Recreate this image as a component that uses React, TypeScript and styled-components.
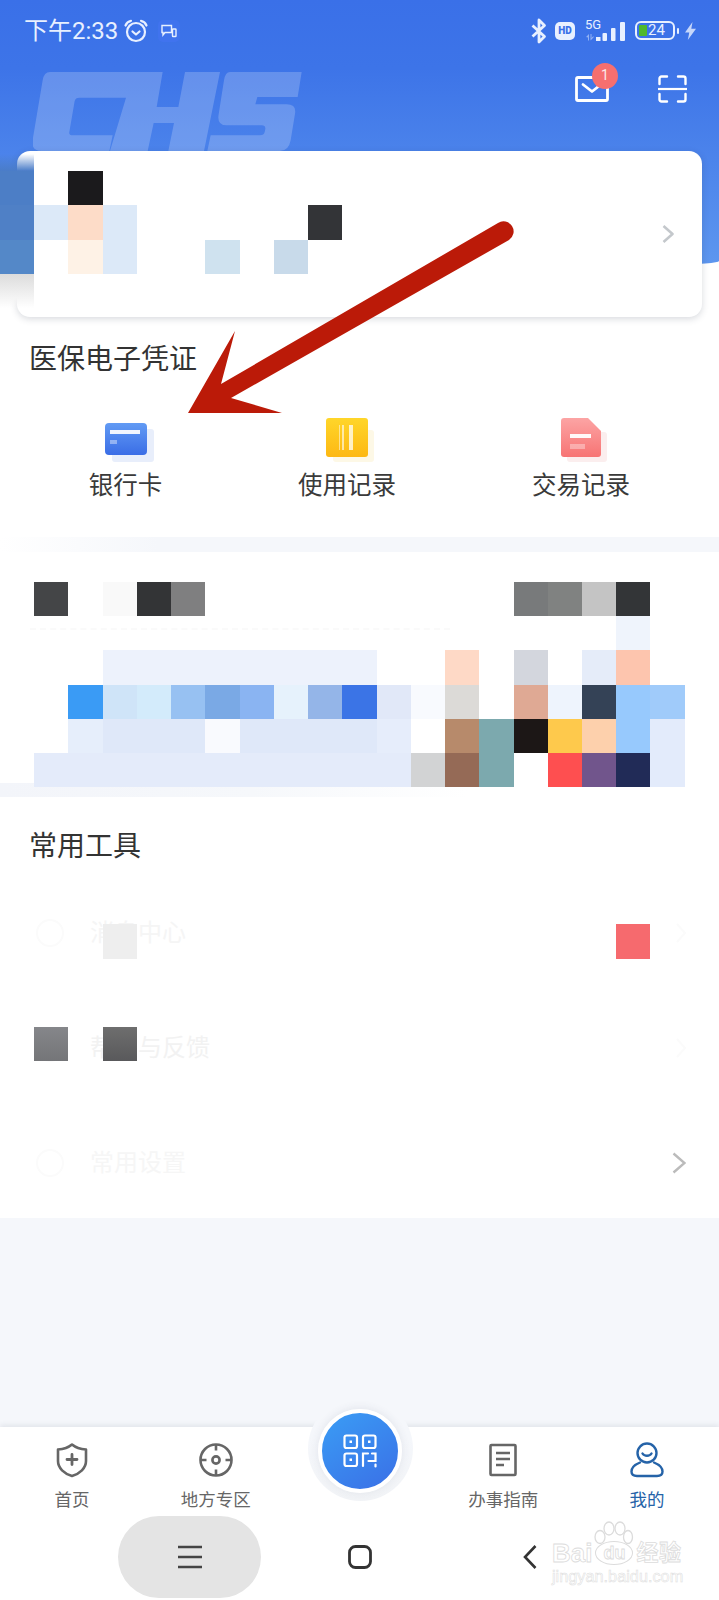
import styled, { createGlobalStyle } from 'styled-components';

const FONT = `Roboto, 'Noto Sans CJK SC', 'Noto Sans', sans-serif`;
const CELL = 719 / 21;

const GlobalStyle = createGlobalStyle`
  html, body {
    margin: 0;
    padding: 0;
    background: #fff;
  }
  * {
    box-sizing: border-box;
  }
`;

const Page = styled.div`
  position: relative;
  width: 719px;
  height: 1600px;
  overflow: hidden;
  background: #fff;
  font-family: ${FONT};
  color: #333;
`;

const Header = styled.header`
  height: 274px;
  padding-top: 1px;
  background: linear-gradient(180deg, #3a70e8 0%, #3d74e8 25%, #5f98ef 100%);
  border-bottom-right-radius: 719px 13px;
`;

const StatusBar = styled.div`
  height: 59px;
  padding: 0 23px 0 24px;
  display: flex;
  align-items: center;
  justify-content: space-between;
  color: #e8f0ff;
`;

const StatusGroup = styled.div`
  display: flex;
  align-items: center;
`;

const Clock = styled.span`
  font-size: 24px;
  line-height: 28px;
  margin-right: 6px;
`;

const AppChip = styled.span`
  width: 22px;
  height: 22px;
  margin-left: 10px;
  border-radius: 5px;
  background: #4073ee;
  display: flex;
  align-items: center;
  justify-content: center;
`;

const HdChip = styled.span`
  width: 20px;
  height: 18px;
  margin: 0 10px 0 8px;
  border-radius: 5px;
  background: #e8f0ff;
  color: #3a70e8;
  font-size: 10px;
  font-weight: 900;
  line-height: 18px;
  text-align: center;
`;

const BatteryShell = styled.span`
  width: 40px;
  height: 19px;
  margin-left: 9px;
  padding: 2px;
  border: 2px solid #e8f0ff;
  border-radius: 6px;
  display: flex;
  align-items: center;
`;

const BatteryFill = styled.span`
  width: 8px;
  height: 11px;
  background: #4fb82c;
  border-radius: 1px;
`;

const BatteryLevel = styled.span`
  margin-left: 1px;
  font-size: 15px;
  line-height: 15px;
`;

const BatteryNub = styled.span`
  width: 2px;
  height: 6px;
  margin: 0 6px 0 2px;
  background: #e8f0ff;
  border-radius: 1px;
`;

const ActionRow = styled.div`
  margin-top: 15px;
  padding-right: 32px;
  height: 28px;
  display: flex;
  justify-content: flex-end;
  align-items: center;
  gap: 49px;
`;

const MailButton = styled.div`
  position: relative;
  width: 34px;
  height: 26px;
`;

const MailBadge = styled.span`
  position: absolute;
  top: -13px;
  right: -9px;
  width: 26px;
  height: 26px;
  border-radius: 50%;
  background: #f66f6f;
  color: #fbe9e9;
  font-size: 14px;
  line-height: 25px;
  text-align: center;
`;

const LogoMark = styled.svg`
  position: absolute;
  top: 72px;
  left: 33px;
  opacity: 0.2;
`;

const ProfileCard = styled.section`
  position: relative;
  width: 685px;
  height: 166px;
  margin: -123px 0 0 17px;
  border-radius: 13px;
  background: #fff;
  box-shadow: 0 2px 7px rgba(40, 50, 70, 0.18);
  display: flex;
  align-items: center;
  justify-content: flex-end;
  padding-right: 28px;
`;

const Voucher = styled.section`
  height: 220px;
  padding-top: 23px;
`;

const SectionTitle = styled.h2`
  margin: 0;
  padding-left: 29px;
  font-size: 28px;
  font-weight: 400;
  line-height: 40px;
  color: #333;
`;

const VoucherGrid = styled.div`
  margin-top: 36px;
  display: grid;
  grid-template-columns: 251px 192px 1fr;
`;

const VoucherItem = styled.div`
  display: flex;
  flex-direction: column;
  align-items: center;
`;

const VoucherLabel = styled.span`
  margin-top: 6px;
  font-size: 24.5px;
  line-height: 32px;
  color: #3a3a3a;
`;

const Band = styled.div<{ $fade: 'left' | 'right' }>`
  height: ${(p) => (p.$fade === 'left' ? 15 : 14)}px;
  background: ${(p) =>
    p.$fade === 'left'
      ? 'linear-gradient(90deg, #fff 0%, #f5f7fb 22%, #f5f7fb 100%)'
      : 'linear-gradient(90deg, #f3f5fa 0%, #f6f8fb 35%, #fff 65%)'};
`;

const Promo = styled.section`
  height: 231px;
  padding: 76px 269px 0 30px;
`;

const FaintRule = styled.div`
  border-top: 2px dashed #fafafa;
`;

const Tools = styled.section`
  height: 421px;
  padding-top: 30px;
`;

const ToolList = styled.div`
  margin-top: 8px;
`;

const ToolRow = styled.div`
  height: 115px;
  padding: 0 33px 0 36px;
  display: flex;
  align-items: center;
`;

const ToolGlyph = styled.span`
  width: 28px;
  height: 28px;
  border: 2px solid #fbfbfb;
  border-radius: 50%;
`;

const ToolLabel = styled.span<{ $tone: string }>`
  margin-left: 26px;
  flex: 1;
  font-size: 24px;
  line-height: 32px;
  color: ${(p) => p.$tone};
`;

const Filler = styled.div`
  height: 209px;
  background: #f5f7fb;
`;

const TabBar = styled.nav`
  position: relative;
  height: 173px;
  background: #fff;
  box-shadow: 0 -2px 5px rgba(60, 70, 90, 0.1);
`;

const TabGrid = styled.div`
  display: grid;
  grid-template-columns: repeat(5, 1fr);
  height: 87px;
  padding-top: 15px;
`;

const Tab = styled.div<{ $active?: boolean }>`
  display: flex;
  flex-direction: column;
  align-items: center;
  color: ${(p) => (p.$active ? '#2563a8' : '#666')};
`;

const TabLabel = styled.span`
  margin-top: 10px;
  font-size: 17.5px;
  line-height: 24px;
`;

const FabHalo = styled.div`
  position: absolute;
  top: -31px;
  left: 50%;
  width: 105px;
  height: 105px;
  margin-left: -52px;
  border-radius: 50%;
  background: linear-gradient(180deg, #f5f7fb 0%, #f5f7fb 40%, #f1f3f6 100%);
  display: flex;
  align-items: center;
  justify-content: center;
  padding-top: 4px;
`;

const FabButton = styled.div`
  width: 84px;
  height: 84px;
  border: 4px solid #fff;
  border-radius: 50%;
  background: linear-gradient(145deg, #3a9df5 0%, #3a6fe6 100%);
  box-shadow: 0 -1px 9px rgba(60, 70, 100, 0.1);
  display: flex;
  align-items: center;
  justify-content: center;
`;

const NavKeys = styled.div`
  padding-top: 2px;
  display: grid;
  grid-template-columns: repeat(3, 170px);
  justify-content: center;
  justify-items: center;
  align-items: center;
`;

const MenuPill = styled.div`
  width: 143px;
  height: 82px;
  border-radius: 41px;
  background: #e4e4e4;
  display: flex;
  align-items: center;
  justify-content: center;
`;

const MosaicLayer = styled.div`
  position: absolute;
  top: 0;
  left: 0;
  width: 719px;
  display: grid;
  grid-template-columns: repeat(21, ${CELL}px);
  grid-auto-rows: ${CELL}px;
  pointer-events: none;
`;

const MosaicCell = styled.div<{ $col: number; $row: number; $fill: string }>`
  grid-column: ${(p) => p.$col + 1};
  grid-row: ${(p) => p.$row + 1};
  background: ${(p) => p.$fill};
`;

const ArrowLayer = styled.svg`
  position: absolute;
  top: 0;
  left: 0;
  pointer-events: none;
`;

const Watermark = styled.div`
  position: absolute;
  left: 552px;
  top: 1520px;
  width: 130px;
  height: 66px;
  font-family: 'Liberation Sans', 'Noto Sans CJK SC', sans-serif;
  color: #fff;
  -webkit-text-stroke: 0.8px #dcdcdc;
`;

const WatermarkPaw = styled.svg`
  position: absolute;
  left: 40px;
  top: 1px;
`;

const WatermarkBrand = styled.div`
  position: absolute;
  top: 19px;
  left: 0;
  height: 28px;
  display: flex;
  align-items: center;
  font-size: 26px;
  font-weight: 700;
  line-height: 28px;
  white-space: nowrap;
`;

const WatermarkDu = styled.span`
  width: 38px;
  height: 24px;
  margin: 0 3px;
  border: 1px solid #dcdcdc;
  border-radius: 50%;
  font-size: 18px;
  line-height: 22px;
  text-align: center;
`;

const WatermarkCn = styled.span`
  font-size: 22px;
  letter-spacing: 0.5px;
`;

const WatermarkSite = styled.div`
  position: absolute;
  top: 47px;
  left: 0;
  font-size: 16.3px;
  line-height: 18px;
  -webkit-text-stroke: 0.5px #dcdcdc;
  white-space: nowrap;
`;

// [col, row, fill] on the 21-column pixelation grid used by the screenshot
const mosaic: [number, number, string][] = [
  [0, 4, 'linear-gradient(180deg, transparent 50%, #4a7cc8 100%)'],
  [0, 5, '#4c7ec6'],
  [2, 5, '#1b1a1c'],
  [0, 6, '#4f80c6'],
  [1, 6, '#dce9f8'],
  [2, 6, '#fddcc8'],
  [3, 6, '#dce9f8'],
  [9, 6, '#333437'],
  [0, 7, '#5488c8'],
  [2, 7, '#fef2e6'],
  [3, 7, '#dce9f8'],
  [6, 7, '#cfe2ef'],
  [8, 7, '#c8daea'],
  [0, 8, 'linear-gradient(180deg, #dcdcdc 0%, #f4f4f4 70%, transparent 100%)'],
  [1, 17, '#444547'],
  [3, 17, '#f9f9f9'],
  [4, 17, '#333436'],
  [5, 17, '#7f7f80'],
  [15, 17, '#787a7b'],
  [16, 17, '#808281'],
  [17, 17, '#c4c4c4'],
  [18, 17, '#333537'],
  [18, 18, '#eff4fc'],
  ...[3, 4, 5, 6, 7, 8, 9, 10].map((col): [number, number, string] => [col, 19, '#edf2fc']),
  [13, 19, '#fed9c6'],
  [15, 19, '#d3d6dd'],
  [17, 19, '#e5ecf9'],
  [18, 19, '#fdc5ae'],
  [2, 20, '#3a9bf5'],
  [3, 20, '#cfe4f8'],
  [4, 20, '#d3ebfb'],
  [5, 20, '#97c1f2'],
  [6, 20, '#7aa9e5'],
  [7, 20, '#8ab4f2'],
  [8, 20, '#e6f2fc'],
  [9, 20, '#94b5e8'],
  [10, 20, '#3b74e6'],
  [11, 20, '#e1e8f8'],
  [12, 20, '#f8fafe'],
  [13, 20, '#dcdad7'],
  [15, 20, '#dfa994'],
  [16, 20, '#eef4fd'],
  [17, 20, '#344256'],
  [18, 20, '#97c9fd'],
  [19, 20, '#a0cbfa'],
  [2, 21, '#e6eefb'],
  [3, 21, '#dfe8f9'],
  [4, 21, '#dfe8f9'],
  [5, 21, '#dfe8f9'],
  [6, 21, '#f9fafe'],
  [7, 21, '#dfe8f9'],
  [8, 21, '#dfe8f9'],
  [9, 21, '#dfe8f9'],
  [10, 21, '#dfe8f9'],
  [11, 21, '#e6edfb'],
  [13, 21, '#b78a6b'],
  [14, 21, '#7ca9ae'],
  [15, 21, '#1c1716'],
  [16, 21, '#fec94c'],
  [17, 21, '#fdd0ac'],
  [18, 21, '#97c9fd'],
  [19, 21, '#e3ebfb'],
  ...[1, 2, 3, 4, 5, 6, 7, 8, 9, 10, 11].map((col): [number, number, string] => [col, 22, '#e4ebfa']),
  [12, 22, '#d2d3d4'],
  [13, 22, '#956a56'],
  [14, 22, '#7ca9ae'],
  [16, 22, '#fe4f50'],
  [17, 22, '#71558c'],
  [18, 22, '#212b57'],
  [19, 22, '#e3ebfb'],
  [3, 27, '#eeeeee'],
  [18, 27, '#f66a6e'],
  [1, 30, 'linear-gradient(180deg, #85868a 0%, #747578 100%)'],
  [3, 30, 'linear-gradient(180deg, #6e6e6e 0%, #59595b 100%)'],
];

const voucherItems = [
  {
    label: '银行卡',
    icon: (
      <svg width="56" height="48" viewBox="0 0 56 48">
        <defs>
          <linearGradient id="cardFill" x1="0" y1="0" x2="0" y2="1">
            <stop offset="0" stopColor="#629bf4" />
            <stop offset="1" stopColor="#3a6de6" />
          </linearGradient>
        </defs>
        <rect x="14" y="13" width="42" height="33" rx="3" fill="#e8eefb" />
        <rect x="7" y="7" width="42" height="32" rx="4" fill="url(#cardFill)" />
        <rect x="12" y="14" width="30" height="4" fill="#fff" opacity="0.92" />
        <rect x="12" y="24" width="7" height="4" fill="#fff" opacity="0.4" />
      </svg>
    ),
  },
  {
    label: '使用记录',
    icon: (
      <svg width="56" height="48" viewBox="0 0 56 48">
        <defs>
          <linearGradient id="logFill" x1="0" y1="0" x2="0" y2="1">
            <stop offset="0" stopColor="#ffd62a" />
            <stop offset="1" stopColor="#fdb813" />
          </linearGradient>
        </defs>
        <rect x="14" y="14" width="41" height="32" rx="3" fill="#fdf8e6" />
        <rect x="7" y="2" width="42" height="39" rx="3" fill="url(#logFill)" />
        <rect x="20" y="9" width="1" height="25" fill="#fff" opacity="0.5" />
        <rect x="23" y="9" width="2" height="25" fill="#fff" opacity="0.6" />
        <rect x="30" y="9" width="4" height="25" fill="#fff" opacity="0.75" />
      </svg>
    ),
  },
  {
    label: '交易记录',
    icon: (
      <svg width="56" height="48" viewBox="0 0 56 48">
        <defs>
          <linearGradient id="tradeFill" x1="0" y1="0" x2="0" y2="1">
            <stop offset="0" stopColor="#fca4a4" />
            <stop offset="1" stopColor="#f77474" />
          </linearGradient>
        </defs>
        <rect x="14" y="16" width="40" height="30" rx="3" fill="#fbeeee" />
        <path
          d="M11 2h24l13 13v23a3 3 0 0 1-3 3H11a3 3 0 0 1-3-3V5a3 3 0 0 1 3-3z"
          fill="url(#tradeFill)"
        />
        <rect x="17" y="18" width="21" height="4" fill="#fff" opacity="0.95" />
        <rect x="17" y="28" width="15" height="5" fill="#fff" opacity="0.35" />
      </svg>
    ),
  },
];

const tabs = [
  {
    label: '首页',
    icon: (
      <svg width="34" height="36" viewBox="0 0 34 36" fill="none" stroke="currentColor" strokeWidth="2.6">
        <path d="M17 2.500c3.600 3 8.600 4.600 14 5v11.500c0 7.200-6.200 12.600-14 15-7.800-2.400-14-7.800-14-15V7.500c5.400-.4 10.400-2 14-5z" strokeLinejoin="round" />
        <path d="M17 12.500v10M12 17.500h10" strokeWidth="2.8" strokeLinecap="round" />
      </svg>
    ),
  },
  {
    label: '地方专区',
    icon: (
      <svg width="36" height="36" viewBox="0 0 36 36" fill="none" stroke="currentColor" strokeWidth="2.6">
        <circle cx="18" cy="18" r="15.500" />
        <circle cx="18" cy="18" r="3.600" />
        <path d="M18 2.500v6M18 27.500v6M2.500 18h6M27.500 18h6" />
      </svg>
    ),
  },
  { label: '', icon: null },
  {
    label: '办事指南',
    icon: (
      <svg width="28" height="36" viewBox="0 0 28 36" fill="none" stroke="currentColor" strokeWidth="2.6">
        <rect x="1.500" y="3" width="25" height="30" rx="1" />
        <path d="M7 11h14M7 17h14M7 23h8" strokeWidth="2.400" />
      </svg>
    ),
  },
  {
    label: '我的',
    active: true,
    icon: (
      <svg width="34" height="36" viewBox="0 0 34 36" fill="none" stroke="currentColor" strokeWidth="2.4">
        <circle cx="17" cy="11" r="9.500" />
        <path d="M12.500 11.500c1.800 3 7.200 3 9 0" strokeLinecap="round" />
        <path d="M10 20.500C5 22.500 1.500 26 1.500 29.500c0 3 2.500 4.500 5.500 4.500h20c3 0 5.500-1.500 5.500-4.500 0-3.500-3.500-7-8.500-9" strokeLinecap="round" />
      </svg>
    ),
  },
];

function App() {
  return (
    <Page>
      <GlobalStyle />
      <Header>
        <LogoMark width="269" height="79" viewBox="100 215 805 237" fill="#fff">
          <path d="M150 215H488L470 320H535L555 215H660L612 452H505L522 368H461L443 452H330L378 292H238Q226 292 224 302L208 395Q206 405 218 405H338L328 452H125Q92 452 98 418L128 240Q132 215 150 215Z" />
          <path d="M690 215H905L893 290H772L766 312H860Q890 312 885 340L872 420Q866 452 840 452H622L632 405H780Q792 405 794 395L796 386Q797 375 785 375H680Q650 375 656 342L672 240Q676 215 690 215Z" />
        </LogoMark>
        <StatusBar>
          <StatusGroup>
            <Clock>下午2:33</Clock>
            <svg width="24" height="24" viewBox="0 0 24 24" fill="none" stroke="#e8f0ff" strokeWidth="2.200">
              <circle cx="12" cy="13" r="9" />
              <path d="M8.500 12.500l3.500 3 3.500-3" strokeLinecap="round" strokeLinejoin="round" />
              <path d="M1.500 6.500C2.500 4 4.500 2.300 7 1.800M22.500 6.500C21.500 4 19.500 2.300 17 1.800" strokeLinecap="round" />
            </svg>
            <AppChip>
              <svg width="16" height="14" viewBox="0 0 16 14" fill="none" stroke="#e8f0ff" strokeWidth="1.400">
                <path d="M1 1.500h9.500v7H4L2 11V8.500H1z" />
                <rect x="11.500" y="5" width="3.500" height="7.500" rx="0.600" />
              </svg>
            </AppChip>
          </StatusGroup>
          <StatusGroup>
            <svg width="16" height="26" viewBox="0 0 16 26" fill="none" stroke="#e8f0ff" strokeWidth="2.800">
              <path d="M1.500 7.500L13.500 18.500L8 24V2L13.500 7.500L1.500 18.500" strokeLinejoin="round" />
            </svg>
            <HdChip>HD</HdChip>
            <svg width="41" height="26" viewBox="0 0 41 26" fill="#e8f0ff">
              <text x="0" y="11" fontSize="13" fontFamily="Roboto, sans-serif">5G</text>
              <path d="M1 19l3-3v6.500H3V19.500zM5.500 16h1v4l2-2v1.500l-3 3z" opacity="0.5" />
              <rect x="11" y="19" width="4.500" height="4" />
              <rect x="17.500" y="15" width="4.500" height="8" rx="1" />
              <rect x="26" y="10" width="4.500" height="13" rx="1" />
              <rect x="35" y="4" width="5" height="19" rx="1" />
            </svg>
            <BatteryShell>
              <BatteryFill />
              <BatteryLevel>24</BatteryLevel>
            </BatteryShell>
            <BatteryNub />
            <svg width="11" height="18" viewBox="0 0 11 18" fill="#e8f0ff" opacity="0.8">
              <path d="M7.500 0L0 10.500h4.300L2.800 18L11 6.800H6.300z" />
            </svg>
          </StatusGroup>
        </StatusBar>
        <ActionRow>
          <MailButton>
            <svg width="34" height="26" viewBox="0 0 34 26" fill="none" stroke="#fff" strokeWidth="2.800">
              <rect x="1.500" y="1.500" width="31" height="23" rx="1.500" />
              <path d="M8 8.500l9 7 9-7" strokeLinecap="round" strokeLinejoin="round" />
            </svg>
            <MailBadge>1</MailBadge>
          </MailButton>
          <svg width="29" height="28" viewBox="0 0 29 28" fill="none" stroke="#fff" strokeWidth="2.400" strokeLinecap="round">
            <path d="M1.500 9V3.500a2 2 0 0 1 2-2H9M20 1.500h5.500a2 2 0 0 1 2 2V9M27.500 19v5.500a2 2 0 0 1-2 2H20M9 26.500H3.500a2 2 0 0 1-2-2V19" />
            <path d="M0 14h29" strokeWidth="2.200" strokeLinecap="butt" />
          </svg>
        </ActionRow>
      </Header>

      <ProfileCard>
        <svg width="12" height="18" viewBox="0 0 12 18" fill="none" stroke="#c4c8cc" strokeWidth="2.600">
          <path d="M1.500 1l9 8-9 8" strokeLinejoin="round" />
        </svg>
      </ProfileCard>

      <Voucher>
        <SectionTitle>医保电子凭证</SectionTitle>
        <VoucherGrid>
          {voucherItems.map((item) => (
            <VoucherItem key={item.label}>
              {item.icon}
              <VoucherLabel>{item.label}</VoucherLabel>
            </VoucherItem>
          ))}
        </VoucherGrid>
      </Voucher>
      <Band $fade="left" />

      <Promo>
        <FaintRule />
      </Promo>
      <Band $fade="right" />

      <Tools>
        <SectionTitle>常用工具</SectionTitle>
        <ToolList>
          <ToolRow>
            <ToolGlyph />
            <ToolLabel $tone="#f5f5f5">消息中心</ToolLabel>
            <svg width="10" height="20" viewBox="0 0 10 20" fill="none" stroke="#fbfbfb" strokeWidth="2">
              <path d="M1 1l8 9-8 9" />
            </svg>
          </ToolRow>
          <ToolRow>
            <ToolGlyph />
            <ToolLabel $tone="#f2f2f2">帮助与反馈</ToolLabel>
            <svg width="10" height="20" viewBox="0 0 10 20" fill="none" stroke="#fbfbfb" strokeWidth="2">
              <path d="M1 1l8 9-8 9" />
            </svg>
          </ToolRow>
          <ToolRow>
            <ToolGlyph />
            <ToolLabel $tone="#f6f6f6">常用设置</ToolLabel>
            <svg width="14" height="22" viewBox="0 0 14 22" fill="none" stroke="#bbb" strokeWidth="2.400">
              <path d="M1.500 1.500l11 9.500-11 9.500" />
            </svg>
          </ToolRow>
        </ToolList>
      </Tools>

      <Filler />

      <TabBar>
        <TabGrid>
          {tabs.map((tab, idx) => (
            <Tab key={idx} $active={tab.active}>
              {tab.icon}
              {tab.label && <TabLabel>{tab.label}</TabLabel>}
            </Tab>
          ))}
        </TabGrid>
        <FabHalo>
          <FabButton>
            <svg width="34" height="34" viewBox="0 0 34 34" fill="none" stroke="#fff" strokeWidth="2.200">
              <rect x="1.500" y="1.500" width="12.500" height="12.500" rx="2" />
              <rect x="1.500" y="19.500" width="12.500" height="12.500" rx="2" />
              <rect x="20" y="1.500" width="12.500" height="12.500" rx="2" />
              <path d="M20 32v-12.500h5M29 19.500h3.500v7.500h-7M32.500 30.500v2" strokeLinecap="round" />
              <path d="M6.500 7.750h2.500M6.500 25.750h2.500M25 7.750h2.500" strokeWidth="2.500" />
            </svg>
          </FabButton>
        </FabHalo>
        <NavKeys>
          <MenuPill>
            <svg width="24" height="24" viewBox="0 0 24 24" stroke="#444" strokeWidth="2.600">
              <path d="M0 2h24M0 12h24M0 22h24" />
            </svg>
          </MenuPill>
          <svg width="24" height="24" viewBox="0 0 24 24" fill="none" stroke="#333" strokeWidth="2.800">
            <rect x="1.500" y="1.500" width="21" height="21" rx="6" />
          </svg>
          <svg width="14" height="24" viewBox="0 0 14 24" fill="none" stroke="#333" strokeWidth="2.600">
            <path d="M12.500 1L2 12l10.500 11" />
          </svg>
        </NavKeys>
      </TabBar>

      <MosaicLayer>
        {mosaic.map(([col, row, fill]) => (
          <MosaicCell key={`${col}-${row}`} $col={col} $row={row} $fill={fill} />
        ))}
      </MosaicLayer>

      <Watermark>
        <WatermarkPaw width="42" height="30" viewBox="0 0 42 30" fill="none" stroke="#dcdcdc" strokeWidth="1.300">
          <ellipse cx="8" cy="16" rx="5" ry="6.500" />
          <ellipse cx="17" cy="7.500" rx="5" ry="6.500" />
          <ellipse cx="28" cy="7.500" rx="5" ry="6.500" />
          <ellipse cx="36" cy="16" rx="4.500" ry="6.500" />
        </WatermarkPaw>
        <WatermarkBrand>
          Bai
          <WatermarkDu>du</WatermarkDu>
          <WatermarkCn>经验</WatermarkCn>
        </WatermarkBrand>
        <WatermarkSite>jingyan.baidu.com</WatermarkSite>
      </Watermark>

      <ArrowLayer width="719" height="1600" viewBox="0 0 719 1600">
        <path
          d="M188 413L235 331L221 384L498 223A10 10 0 0 1 509 240L231 398L282 413Z"
          fill="#bb1a08"
        />
      </ArrowLayer>
    </Page>
  );
}

export default App;
